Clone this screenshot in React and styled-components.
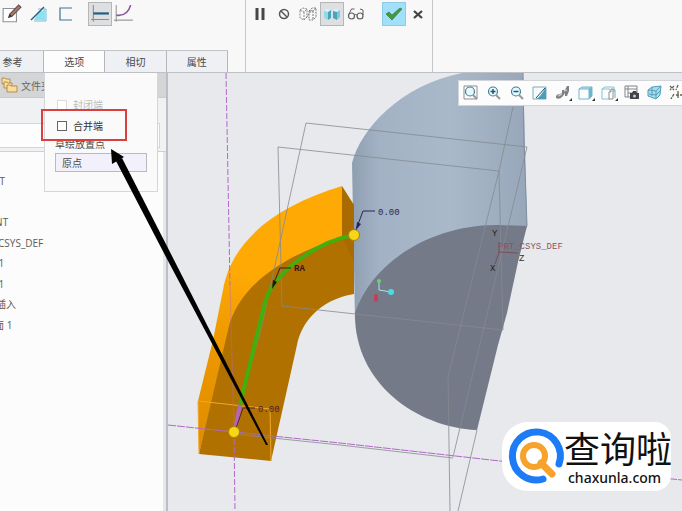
import React, {useState} from 'react';
import styled, {createGlobalStyle, css} from 'styled-components';

const GlobalStyle = createGlobalStyle`
    * {
        box-sizing: border-box;
    }

    body {
        margin: 0;
        background: #e8e9ed;
        color: #4a4a4a;
        font-family: 'Open Sans', 'Noto Sans CJK SC', sans-serif;
        font-size: 10px;
    }

    button, input {
        font: inherit;
        color: inherit;
    }
`

const Page = styled.div`
    position: relative;
    display: flex;
    flex-direction: column;
    min-height: 100vh;
    overflow: hidden;
`

const Ribbon = styled.header`
    display: flex;
    height: 73px;
    background: #f8f8f8;
    border-bottom: 1px solid #bfc0c3;
`

const RibbonLeft = styled.div`
    width: 246px;
    display: flex;
    flex-direction: column;
    justify-content: space-between;
    border-right: 1px solid #c6c7c9;
`

const RibbonMiddle = styled.div`
    width: 187px;
    border-right: 1px solid #c6c7c9;
`

const ToolRow = styled.div`
    display: flex;
    align-items: center;
    padding-top: 2px;
    padding-left: ${({ $left }) => $left || 0}px;
`

const ToolGroup = styled.div`
    display: flex;
    padding-left: ${({ $left }) => $left || 0}px;
    gap: ${({ $gap }) => $gap || 0}px;
`

const ToolButton = styled.button`
    width: 24px;
    height: 24px;
    display: flex;
    align-items: center;
    justify-content: center;
    padding: 0;
    background: transparent;
    border: 1px solid transparent;

    ${({ $tone }) => $tone === 'pressed' && css`
        background: #dedfe1;
        border-color: #b5b6b8;
    `}

    ${({ $tone }) => $tone === 'confirm' && css`
        background: #a2dffa;
        border-color: #8ecbe8;
    `}
`

const Tabs = styled.nav`
    width: 228px;
    display: flex;
    border-top: 1px solid #c2c3c5;
`

const Tab = styled.button`
    flex: ${({ $first }) => $first ? '0 0 44px' : '1 1 0'};
    height: 21px;
    padding: 0 ${({ $first }) => $first ? 18 : 0}px 0 0;
    border: 0;
    border-right: 1px solid #b5b6b8;
    background: ${({ $active }) => $active ? '#fdfdfd' : '#eff0f3'};
    white-space: nowrap;
`

const Workspace = styled.main`
    position: relative;
    flex: 1;
    display: flex;
`

const Sidebar = styled.aside`
    width: 168px;
    flex: none;
    overflow: hidden;
    background: #fcfcfc;
    border-right: 2px solid #bbbdc8;
    box-shadow: inset -3px 0 0 #e6e7ea;
`

const FolderBar = styled.div`
    height: 25px;
    display: flex;
    align-items: center;
    gap: 3px;
    background: #d4d5d7;
    border-bottom: 1px solid #c9cacc;
    color: #666;
    white-space: nowrap;
`

const FilterBar = styled.div`
    padding: 25px 6px 3px 0;
    background: #f0f1f3;
    border-bottom: 1px solid #cfd0d3;
`

const FilterInput = styled.input`
    display: block;
    width: 100%;
    height: 25px;
    border: 1px solid #d4d5d8;
    border-left: 0;
    background: #fdfdfd;
`

const Tree = styled.ul`
    height: 164px;
    margin: 19px 0 0 -24px;
    padding: 0;
    display: flex;
    flex-direction: column;
    justify-content: space-between;
    list-style: none;
`

const TreeItem = styled.li`
    height: 20px;
    line-height: 20px;
    white-space: pre;
    color: #5a5a5a;
`

const OptionPanel = styled.section`
    position: absolute;
    top: 0;
    left: 44px;
    width: 114px;
    padding: 21px 10px 19px;
    background: #fafafb;
    border: 1px solid #d5d6d9;
    border-top: 0;
`

const CheckLabel = styled.label`
    height: 21px;
    display: flex;
    align-items: center;
    gap: 6px;
    padding-left: 2px;
    color: ${({ $disabled }) => $disabled ? '#bcbcbc' : '#333'};
`

const CheckBox = styled.input`
    appearance: none;
    width: 10px;
    height: 10px;
    margin: 0;
    background: #fff;
    border: 1px solid #666;

    &:disabled {
        border-color: #dcdcdc;
    }

    &:checked {
        background: #777;
    }
`

const FieldLabel = styled.label`
    display: block;
    height: 17px;
    line-height: 17px;
`

const PointInput = styled.input`
    display: block;
    width: 100%;
    height: 19px;
    padding: 0 6px;
    background: #f2f1fb;
    border: 1px solid #b9b9c0;
`

const Viewport = styled.div`
    position: relative;
    flex: 1;
    min-width: 0;
    background: #e8e9ed;
`

const Scene = styled.svg`
    position: absolute;
    inset: 0;
    width: 100%;
    height: 100%;
    font-family: 'Liberation Mono', monospace;
    font-size: 9px;
`

const ViewBar = styled.div`
    position: absolute;
    top: 7px;
    right: 0;
    display: flex;
    align-items: center;
    width: 224px;
    height: 26px;
    gap: 3px;
    padding-left: 2px;
    overflow: hidden;
    background: #fcfcfc;
    border: 1px solid #d3d5d9;
    border-right: 0;
`

const ViewButton = styled.button`
    flex: 0 0 20px;
    height: 20px;
    padding: 0;
    display: flex;
    align-items: center;
    justify-content: center;
    background: none;
    border: 0;
`

const Highlight = styled.div`
    position: absolute;
    left: 41px;
    top: 36px;
    width: 86px;
    height: 32px;
    border: 2px solid #d9403f;
    pointer-events: none;
`

const Pointer = styled.svg`
    position: absolute;
    left: 0;
    top: 0;
    width: 280px;
    height: 380px;
    pointer-events: none;
`

const SiteBadge = styled.a`
    position: absolute;
    right: 11px;
    bottom: 20px;
    width: 169px;
    height: 69px;
    display: flex;
    align-items: center;
    padding-left: 5px;
    gap: 1px;
    background: #fff;
    border-radius: 26px 16px 16px 26px;
    color: #111;
    text-decoration: none;
`

const BadgeLogo = styled.svg`
    flex: none;
    width: 56px;
    height: 58px;
    overflow: visible;
`

const BadgeText = styled.div`
    display: flex;
    flex-direction: column;
    white-space: nowrap;
`

const BadgeName = styled.span`
    font-size: 36px;
    line-height: 42px;
    font-family: 'Noto Sans CJK SC', sans-serif;
`

const BadgeHost = styled.span`
    padding-left: 4px;
    font-family: 'Noto Sans', sans-serif;
    font-size: 14px;
    line-height: 20px;
    font-weight: 500;
`

const Icon = ({ size = 18, children }) => (
    <svg width={size} height={size} viewBox="0 0 18 18" fill="none" aria-hidden="true">{children}</svg>
)

const SketchIcon = () => <Icon size={20}>
    <path d="M1 4h12v12H1z" fill="#fff" stroke="#8f9396"/>
    <path d="M6 12l1-3 8-8 2 2-8 8z" fill="#a97b6d" stroke="#61514d"/>
    <path d="M6 12l1-3 2 2z" fill="#333"/>
</Icon>

const PlaneIcon = () => <Icon>
    <path d="M4 15L15 4v11z" fill="#7fdcf0"/>
    <path d="M8 4h8v12H4" stroke="#76bdd2"/>
    <path d="M9 6h6v9H4z" fill="#8be0f2"/>
    <path d="M1 15L14 2" stroke="#315c78" strokeWidth="1.5"/>
</Icon>

const OpenSectionIcon = () => <Icon><path d="M15 3H3v12h12" stroke="#3a7696" strokeWidth="1.2"/></Icon>

const ConstantIcon = () => <Icon size={20}>
    <path d="M3 1v15M1 14h16" stroke="#8c8e91"/>
    <path d="M3 8.5h14" stroke="#255e83" strokeWidth="2"/>
</Icon>

const VariableIcon = () => <Icon size={20}>
    <path d="M2 1v15M0 14.5h17" stroke="#999b9e"/>
    <path d="M2 10c7 1 11-2 13-9" stroke="#8d58a3" strokeWidth="1.5"/>
</Icon>

const PauseIcon = () => <Icon><path d="M4.5 3h3v12h-3zM10.500 3h3v12h-3z" fill="#45484b"/></Icon>

const StopIcon = () => <Icon>
    <circle cx="9" cy="9" r="4.500" stroke="#55585b" strokeWidth="1.5"/>
    <path d="M6 6l6 6" stroke="#55585b" strokeWidth="1.5"/>
</Icon>

const DetachedIcon = () => <Icon>
    <path d="M1 5l3-2 4 1v8l-3 3-4-2zM1 5l4 2 3-3M5 7v8" stroke="#858789" strokeDasharray="2 1"/>
    <path d="M10 6l3-3h4v9l-3 3h-4zM10 6h4l3-3M14 6v9M7 13l6-8" stroke="#77797b" strokeDasharray="2 1"/>
</Icon>

const AttachedIcon = () => <Icon size={18}>
    <path d="M1 6l3-2 4 1-3 2z" fill="#d9f7fb"/>
    <path d="M1 6l4 1v8l-4-2z" fill="#91d9e8"/>
    <path d="M5 7l3-2v8l-3 2z" fill="#4ca2ba"/>
    <path d="M10 6l2-2 5 1-3 2z" fill="#d2f5fa"/>
    <path d="M10 6l4 1v8l-4-2z" fill="#4ba3bd"/>
    <path d="M14 7l3-2v7l-3 3z" fill="#79cbdc"/>
</Icon>

const GlassesIcon = () => <Icon>
    <circle cx="4.5" cy="11" r="3" stroke="#5c5e60" strokeWidth="1.2"/>
    <circle cx="13" cy="11" r="3" stroke="#5c5e60" strokeWidth="1.2"/>
    <path d="M7.5 10q1-1 2.500 0M1.500 10l3-6h3M16 10V5l-3-1" stroke="#5c5e60"/>
</Icon>

const CheckIcon = () => <Icon>
    <path d="M1 9l3-2 3 3 8-7 2 1L7 15z" fill="#3f9b3c" stroke="#2c7132" strokeWidth=".6"/>
</Icon>

const CloseIcon = () => <Icon>
    <path d="M5 6l8 7M13 6l-8 7" stroke="#424548" strokeWidth="2.3"/>
</Icon>

const FolderIcon = () => <svg width="18" height="20" viewBox="0 0 18 20" aria-hidden="true">
    <g fill="#f7dda0" stroke="#b98e47">
        <path d="M2 3h3l1 1h4v5H2z"/>
        <path d="M4 7h3l1 1h4v5H4z"/>
        <path d="M7 10h3l1 1h6v6H7z"/>
    </g>
</svg>

const Lens = ({ sign }) => <>
    <circle cx="8" cy="7.5" r="4.5" fill="#e9f8fc" stroke="#3c8199" strokeWidth="1.2"/>
    <path d="M11 11l4 4" stroke="#9a9894" strokeWidth="2"/>
    {sign && <path d={sign} stroke="#1c5878" strokeWidth="1.5"/>}
</>

const viewTools = [
    {name: '重新调整', icon: <><path d="M2 2h13v13H2z" stroke="#8b8f92"/><Lens/></>},
    {name: '放大', icon: <Lens sign="M5.500 7.500h5M8 5v5"/>},
    {name: '缩小', icon: <Lens sign="M5.500 7.500h5"/>},
    {name: '重画', icon: <>
        <path d="M2 3h13v12H2z" fill="#f5fbfd" stroke="#80aabb"/>
        <path d="M15 3v12H5c3-1 6-5 10-12z" fill="#4d9cba"/>
        <path d="M5 14L14 4" stroke="#214c63"/>
    </>},
    {name: '渲染', menu: true, icon: <>
        <path d="M2 13q0-3 4-3l2-1V6h3l2-4h2v5l-2 5h-2V9l-2 3q-3 4-7 2z" fill="#7d8082"/>
        <path d="M4 12l4-2M10 7l3-1" stroke="#c4c4c4" strokeWidth="1.5"/>
    </>},
    {name: '显示样式', menu: true, icon: <>
        <path d="M2 5l3-2h10l-3 2z" fill="#a9e4ef"/>
        <path d="M12 5l3-2v9l-3 3z" fill="#66b8cd"/>
        <path d="M2 5h10v10H2zM2 5l3-2h10v9l-3 3M12 5l3-2" stroke="#75b7c9"/>
    </>},
    {name: '已保存方向', menu: true, icon: <>
        <path d="M2 5h8v10H2zM2 5l3-2h9v5" stroke="#82c4d5"/>
        <path d="M9 15V8h2V5h2v10z" fill="#fff" stroke="#8e8e90"/>
        <path d="M13 5l2 1v8" stroke="#6ab0c7"/>
    </>},
    {name: '视图管理器', icon: <>
        <path d="M2 2h12v11H2zM2 5h12M5 2v11M5 9h9" stroke="#838587"/>
        <path d="M7 9h2l1-2h3l1 2h2v6H7z" fill="#414346"/>
        <circle cx="11.5" cy="12" r="1.5" fill="#ccc"/>
    </>},
    {name: '透视图', icon: <>
        <path d="M2 6l4-3 9-1-1 9-4 4-8-3z" fill="#a8dcea" stroke="#4e9fbb"/>
        <path d="M2 6l8 1 5-5M10 7v8M3 10l7 1 4-4M6 3v9" stroke="#5b9fb8"/>
    </>},
    {name: '基准显示', menu: true, icon: <>
        <path d="M1 2l4 4M5 2L1 6M9 1L7 6M5 10l-3 5M7 11h8M9 7v8" stroke="#655f43" strokeWidth="1.3" strokeDasharray="3 1"/>
    </>},
]

const treeItems = ['RIGHT', 'TOP', 'FRONT', 'PRT_CSYS_DEF', '拉伸 1', '拉伸 1', '在此插入', ' *截面 1']

const ModelScene = () => (
    <Scene viewBox="168 73 514 438" preserveAspectRatio="xMinYMin slice" role="img" aria-label="模型">
        <defs>
            <linearGradient id="steel" x1="0" x2="1">
                <stop offset="0" stopColor="#8f9fb2"/>
                <stop offset=".15" stopColor="#a2b1c3"/>
                <stop offset=".55" stopColor="#aab9ca"/>
                <stop offset="1" stopColor="#97a7b9"/>
            </linearGradient>
            <linearGradient id="bend" gradientUnits="userSpaceOnUse" x1="200" y1="440" x2="245" y2="270">
                <stop offset="0" stopColor="#e08e00"/>
                <stop offset=".6" stopColor="#ef9900"/>
                <stop offset="1" stopColor="#ffaa04"/>
            </linearGradient>
        </defs>

        {/* half cylinder */}
        <path d="M462 73H523L527 226L500 300L355 320L352 163C360 130 400 85 462 73z" fill="url(#steel)"/>
        <path d="M355 313C372 262 432 224 499 225L527 226L518 262L507 313L498 345L477 430C415 427 354 382 355 313z" fill="#747a88"/>
        <path d="M523 73L524 140L527 226" stroke="#7e8c9c" fill="none"/>

        {/* swept bar */}
        <path d="M198 401L213 340L223 290C231 243 272 207 342 186V237C285 255 241 285 231 325L199 454z" fill="url(#bend)"/>
        <path d="M199 454L228 330C238 285 285 255 342 237L354 240V294C318 300 301 324 297 345L271 461z" fill="#b07100"/>
        <path d="M342 186L354 205V262L342 237z" fill="#a96b00"/>
        <path d="M198 401L270 409L271 461M198 401L199 454" stroke="#f0a82b" fill="none"/>

        {/* datum planes */}
        <g stroke="#858a91" strokeWidth=".8" fill="none">
            <path d="M240 405L262 325L306 123L527 147L453 457"/>
            <path d="M282 306L278 147L499 171L503 330L282 306"/>
            <path d="M513 107L499 171L448 377L450 511M477 430L458 511"/>
            <path d="M234 434L340 445L453 458"/>
        </g>
        <g stroke="#b268c8" fill="none">
            <path d="M226 73L230 285" strokeDasharray="6 2"/>
            <path d="M230 285L234 431" opacity=".45"/>
            <path d="M234 431L235 511" strokeDasharray="6 2"/>
            <path d="M168 425L234 432L340 443L500 461L682 480" strokeDasharray="8 1"/>
        </g>

        {/* trajectory */}
        <path d="M354 235C315 242 274 273 265 302L240 405" stroke="#43ae0d" strokeWidth="4" fill="none"/>
        <path d="M240 405L235 429" stroke="#b266b5" strokeWidth="4" fill="none"/>
        <path d="M354 235L363 211H375" stroke="#272657" fill="none"/>
        <path d="M356 230l1-8 4 2z" fill="#272657"/>
        <text x="378" y="215" fill="#272657">0.00</text>
        <path d="M235 431L243 408H255" stroke="#532331" fill="none"/>
        <text x="258" y="412" fill="#4c2029">0.00</text>
        <path d="M273 285L280 268H291" stroke="#38220b" fill="none"/>
        <path d="M272 289l1-9 4 2z" fill="#24170a"/>
        <text x="294" y="271" fill="#3d1212" fontWeight="bold">RA</text>
        <g fill="#f8d616" stroke="#a68208">
            <circle cx="354" cy="235" r="5.5"/>
            <circle cx="234" cy="432" r="5.5"/>
        </g>

        {/* spin centre */}
        <path d="M379 281V290L391 292" stroke="#a9e6e2" fill="none"/>
        <circle cx="379" cy="281" r="2" fill="#66d36f"/>
        <circle cx="391" cy="292" r="3" fill="#49dbe8"/>
        <ellipse cx="376" cy="298" rx="2" ry="4" fill="#c93c55"/>

        {/* coordinate system */}
        <path d="M499 242V252L518 253M499 252L495 264" stroke="#784f5c" fill="none"/>
        <text x="492" y="236" fill="#222">Y</text>
        <text x="490" y="271" fill="#222">X</text>
        <text x="519" y="261" fill="#333">Z</text>
        <text x="498" y="249" fill="#8d5360">PRT_CSYS_DEF</text>
    </Scene>
)

const App = () => {
    const [activeTab, setActiveTab] = useState('选项');
    const [merge, setMerge] = useState(false);
    const [point, setPoint] = useState('原点');

    return <React.Fragment>
        <GlobalStyle/>
        <Page>
            <Ribbon>
                <RibbonLeft>
                    <ToolRow>
                        <ToolGroup $gap={3}>
                            <ToolButton aria-label="草绘"><SketchIcon/></ToolButton>
                            <ToolButton aria-label="平面"><PlaneIcon/></ToolButton>
                            <ToolButton aria-label="开放截面"><OpenSectionIcon/></ToolButton>
                        </ToolGroup>
                        <ToolGroup $left={10}>
                            <ToolButton $tone="pressed" aria-label="恒定截面"><ConstantIcon/></ToolButton>
                            <ToolButton aria-label="可变截面"><VariableIcon/></ToolButton>
                        </ToolGroup>
                    </ToolRow>
                    <Tabs>
                        {['参考', '选项', '相切', '属性'].map((name, i) => (
                            <Tab key={name} $first={i === 0} $active={name === activeTab} onClick={() => setActiveTab(name)}>{name}</Tab>
                        ))}
                    </Tabs>
                </RibbonLeft>
                <RibbonMiddle>
                    <ToolRow $left={2}>
                        <ToolGroup>
                            <ToolButton aria-label="暂停"><PauseIcon/></ToolButton>
                            <ToolButton aria-label="无预览"><StopIcon/></ToolButton>
                            <ToolButton aria-label="分离"><DetachedIcon/></ToolButton>
                            <ToolButton $tone="pressed" aria-label="连接"><AttachedIcon/></ToolButton>
                            <ToolButton aria-label="预览"><GlassesIcon/></ToolButton>
                        </ToolGroup>
                        <ToolGroup $left={14}>
                            <ToolButton $tone="confirm" aria-label="确定"><CheckIcon/></ToolButton>
                            <ToolButton aria-label="取消"><CloseIcon/></ToolButton>
                        </ToolGroup>
                    </ToolRow>
                </RibbonMiddle>
            </Ribbon>

            <Workspace>
                <Sidebar>
                    <FolderBar><FolderIcon/>文件夹</FolderBar>
                    <FilterBar><FilterInput type="text" aria-label="过滤"/></FilterBar>
                    <Tree>
                        {treeItems.map((item, i) => <TreeItem key={i}>{item}</TreeItem>)}
                    </Tree>
                </Sidebar>

                <Viewport>
                    <ModelScene/>
                    <ViewBar>
                        {viewTools.map(({ name, icon, menu }) => (
                            <ViewButton key={name} aria-label={name}>
                                <Icon>
                                    {icon}
                                    {menu && <path d="M15 17h3v-3z" fill="#333"/>}
                                </Icon>
                            </ViewButton>
                        ))}
                    </ViewBar>
                </Viewport>

                <OptionPanel>
                    <CheckLabel $disabled>
                        <CheckBox type="checkbox" disabled/>
                        封闭端
                    </CheckLabel>
                    <CheckLabel>
                        <CheckBox type="checkbox" checked={merge} onChange={(e) => setMerge(e.target.checked)}/>
                        合并端
                    </CheckLabel>
                    <FieldLabel htmlFor="point">草绘放置点</FieldLabel>
                    <PointInput id="point" type="text" value={point} onChange={(e) => setPoint(e.target.value)}/>
                </OptionPanel>
                <Highlight/>
                <Pointer viewBox="0 73 280 380" aria-hidden="true">
                    <path d="M111 149L112 164L124 157z" fill="#000"/>
                    <path d="M116 161L122 158L172 256L268 445L266 445L167 259z" fill="#000"/>
                </Pointer>
            </Workspace>

            <SiteBadge href="#">
                <BadgeLogo viewBox="0 0 56 58" fill="none" aria-hidden="true">
                    <path d="M52 36A24 24 0 1 0 36 51" stroke="#1d7cf5" strokeWidth="7" strokeLinecap="round"/>
                    <path d="M34 35L45 46" stroke="#f6a22b" strokeWidth="7" strokeLinecap="round"/>
                    <circle cx="27" cy="28" r="11" stroke="#f6a22b" strokeWidth="6"/>
                </BadgeLogo>
                <BadgeText>
                    <BadgeName>查询啦</BadgeName>
                    <BadgeHost>chaxunla.com</BadgeHost>
                </BadgeText>
            </SiteBadge>
        </Page>
    </React.Fragment>
}

export default App;
